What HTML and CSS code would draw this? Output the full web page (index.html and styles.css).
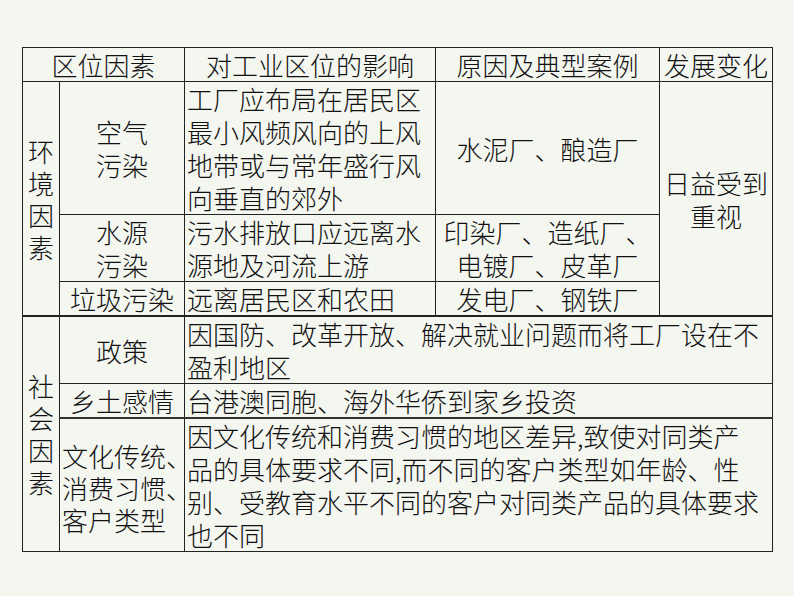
FILE: index.html
```html
<!DOCTYPE html>
<html lang="zh-CN">
<head>
<meta charset="utf-8">
<link rel="stylesheet" href="styles.css">
</head>
<body>
<table class="grid">
  <colgroup>
    <col class="c1"><col class="c2"><col class="c3"><col class="c4"><col class="c5">
  </colgroup>
  <tr class="head">
    <td colspan="2" class="ctr">区位因素</td>
    <td class="ctr">对工业区位的影响</td>
    <td class="ctr">原因及典型案例</td>
    <td class="ctr">发展变化</td>
  </tr>
  <tr>
    <td rowspan="3" class="ctr vert">环<br>境<br>因<br>素</td>
    <td class="ctr">空气<br>污染</td>
    <td class="lft">工厂应布局在居民区<br>最小风频风向的上风<br>地带或与常年盛行风<br>向垂直的郊外</td>
    <td class="ctr">水泥厂、酿造厂</td>
    <td rowspan="3" class="ctr">日益受到<br>重视</td>
  </tr>
  <tr>
    <td class="ctr">水源<br>污染</td>
    <td class="lft">污水排放口应远离水<br>源地及河流上游</td>
    <td class="ctr">印染厂、造纸厂、<br>电镀厂、皮革厂</td>
  </tr>
  <tr>
    <td class="ctr">垃圾污染</td>
    <td class="lft">远离居民区和农田</td>
    <td class="ctr">发电厂、钢铁厂</td>
  </tr>
  <tr class="sect">
    <td rowspan="3" class="ctr vert">社<br>会<br>因<br>素</td>
    <td class="ctr">政策</td>
    <td colspan="3" class="lft">因国防、改革开放、解决就业问题而将工厂设在不<br>盈利地区</td>
  </tr>
  <tr>
    <td class="ctr">乡土感情</td>
    <td colspan="3" class="lft">台港澳同胞、海外华侨到家乡投资</td>
  </tr>
  <tr class="heavy">
    <td class="lft low">文化传统<span class="pn">、</span><br>消费习惯<span class="pn">、</span><br>客户类型</td>
    <td colspan="3" class="lft">因文化传统和消费习惯的地区差异,致使对同类产<br>品的具体要求不同,而不同的客户类型如年龄、性<br>别、受教育水平不同的客户对同类产品的具体要求<br>也不同</td>
  </tr>
</table>
</body>
</html>
```

FILE: styles.css
```css
html, body {
  margin: 0;
  padding: 0;
  background: #f4f6f0;
}
body {
  padding: 47px 0 0 22px;
  font-family: "Noto Sans CJK SC", "Noto Sans", sans-serif;
  font-weight: 300;
  color: #111;
}
.grid {
  border-collapse: collapse;
  table-layout: fixed;
  width: 750px;
  font-size: 26px;
  line-height: 33px;
}
.c1 { width: 37px; }
.c2 { width: 125px; }
.c3 { width: 251px; }
.c4 { width: 224px; }
.c5 { width: 113px; }
.grid td {
  border: 1px solid #222;
  padding: 0;
  vertical-align: middle;
  white-space: nowrap;
  overflow: visible;
}
.grid .ctr { text-align: center; }
.grid .lft { text-align: left; padding-left: 2px; }
.grid .vert { line-height: 32px; }
.grid .low { padding-top: 6px; line-height: 32px; }
.sect td { border-top: 2px solid #222; }
.heavy td { border-top: 2px solid #333; }
.pn {
  display: inline-block;
  width: 13px;
}
```
